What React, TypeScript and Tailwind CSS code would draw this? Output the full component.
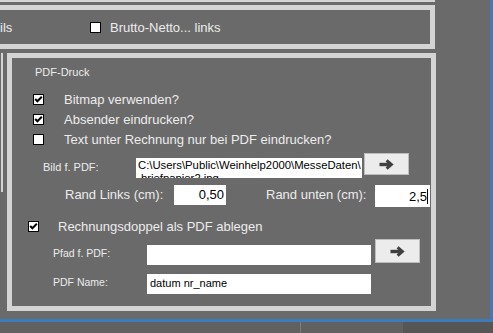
import React from 'react';

const Haken = () => (
  <svg width="9" height="9" viewBox="0 0 9 9">
    <polyline points="1.2,4 3.4,6.3 7.8,1.8" fill="none" stroke="#000" strokeWidth="2" />
  </svg>
);

const Checkbox = ({ checked = false }: { checked?: boolean }) => (
  <span className="w-[11px] h-[11px] shrink-0 bg-white border border-black flex items-center justify-center">
    {checked && <Haken />}
  </span>
);

const PfeilButton = ({ hoehe }: { hoehe: string }) => (
  <div className={`w-[45px] ${hoehe} shrink-0 bg-[#ececec] border border-[#bdbdbd] flex items-center justify-center`}>
    <svg width="15" height="11" viewBox="0 0 15 11">
      <path d="M0.5 5.5 H11" stroke="#404040" strokeWidth="3.4" fill="none" />
      <path d="M7.6 1.3 L12.4 5.5 L7.6 9.7" stroke="#404040" strokeWidth="3" fill="none" />
    </svg>
  </div>
);

const Zeile = ({ checked, text }: { checked?: boolean; text: string }) => (
  <div className="h-[20px] flex items-center pl-[21px]">
    <Checkbox checked={checked} />
    <span className="ml-[20px] text-[13px] leading-[15px]">{text}</span>
  </div>
);

export default function App() {
  return (
    <div className="w-[493px] h-[333px] overflow-hidden bg-[#6a6a6a] font-['Liberation_Sans',Arial,sans-serif] text-[#ececec]">
      <div className="h-[322px] border-r-[3px] border-b-[3px] border-[#3c7bbd]">
        {/* Rest vom oberen Rahmen */}
        <div className="h-[2px] w-[435px] bg-[#d4d4d4]" />

        {/* Rahmen Brutto-Netto */}
        <div className="mt-[3px] ml-[-10px] w-[445px] h-[44px] border-[5px] border-[#d4d4d4] flex items-center">
          <span className="w-[95px] pl-[5px] text-[13px] leading-[15px]">ils</span>
          <Checkbox />
          <span className="ml-[9px] text-[13px] leading-[15px]">Brutto-Netto... links</span>
        </div>

        <div className="mt-[4px] flex">
          <div className="ml-[1px] w-[2px] h-[139px] bg-[#d4d4d4]" />

          {/* PDF-Druck */}
          <div className="ml-[4px] w-[429px] h-[258px] border-[5px] border-[#d4d4d4]">
            <div className="pt-[8px] pl-[23px] text-[11px] leading-[13px]">PDF-Druck</div>

            <div className="mt-[10px]">
              <Zeile checked text="Bitmap verwenden?" />
              <Zeile checked text="Absender eindrucken?" />
              <Zeile text="Text unter Rechnung nur bei PDF eindrucken?" />
            </div>

            {/* Bild */}
            <div className="mt-[4px] flex items-start pl-[31px]">
              <span className="w-[93px] mt-[8px] text-[11px] leading-[13px]">Bild f. PDF:</span>
              <div className="mt-[5px] w-[226px] h-[20px] bg-white overflow-hidden pl-[2px] pt-[1px] text-black text-[11.3px] leading-[13px] whitespace-nowrap">
                <div>C:\Users\Public\Weinhelp2000\MesseDaten\</div>
                <div className="pl-[3px]">briefpapier2.jpg</div>
              </div>
              <div className="ml-[2px]">
                <PfeilButton hoehe="h-[22px]" />
              </div>
            </div>

            {/* Rand */}
            <div className="mt-[7px] flex items-start pl-[53px]">
              <span className="w-[109px] mt-[2px] text-[13px] leading-[15px]">Rand Links (cm):</span>
              <div className="w-[52px] h-[20px] bg-white text-black text-[13px] leading-[20px] text-right pr-[2px]">0,50</div>
              <span className="ml-[40px] w-[109px] mt-[2px] text-[13px] leading-[15px]">Rand unten (cm):</span>
              <div className="w-[55px] h-[22px] bg-white text-black text-[13px] leading-[21px] text-right pr-[2px] flex justify-end items-center">
                <span>2,5</span>
                <span className="w-px h-[15px] bg-black" />
              </div>
            </div>

            {/* Rechnungsdoppel */}
            <div className="mt-[9px] h-[20px] flex items-center pl-[16px]">
              <Checkbox checked />
              <span className="ml-[19px] text-[13px] leading-[15px]">Rechnungsdoppel als PDF ablegen</span>
            </div>

            {/* Pfad */}
            <div className="mt-[3px] flex items-start pl-[41px]">
              <span className="w-[94px] mt-[8px] text-[10.5px] leading-[13px]">Pfad f. PDF:</span>
              <div className="mt-[6px] w-[224px] h-[20px] bg-white" />
              <div className="ml-[4px]">
                <PfeilButton hoehe="h-[24px]" />
              </div>
            </div>

            {/* Name */}
            <div className="mt-[9px] flex items-start pl-[41px]">
              <span className="w-[94px] mt-[2px] text-[10.5px] leading-[13px]">PDF Name:</span>
              <div className="w-[224px] h-[20px] bg-white pl-[3px] pt-[3px] text-black text-[11px] leading-[13px]">datum nr_name</div>
            </div>
          </div>
        </div>
      </div>

      <div className="h-[11px] flex">
        <div className="w-[300px] bg-[#616161]" />
        <div className="w-px bg-[#7c7c7c]" />
        <div className="w-[102px] bg-[#616161]" />
        <div className="flex-1 bg-[#565656]" />
      </div>
    </div>
  );
}
